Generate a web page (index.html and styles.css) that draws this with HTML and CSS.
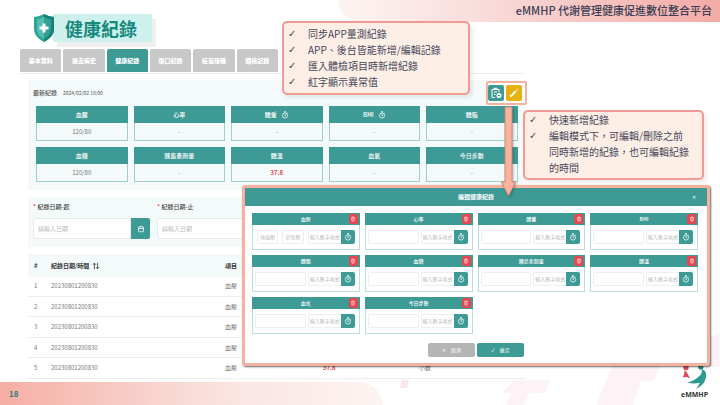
FILE: index.html
```html
<!DOCTYPE html>
<html lang="zh-Hant">
<head>
<meta charset="utf-8">
<title>健康紀錄</title>
<link rel="stylesheet" href="styles.css">
</head>
<body>
<svg class="symbols" aria-hidden="true">
  <symbol id="clock" viewBox="0 0 16 16"><path d="M6 1.2h4M8 2v2M12.4 3.6l1.2 1.2" /><circle cx="8" cy="9" r="5.2"/><path d="M8 6v3.2h2"/></symbol>
  <symbol id="trash" viewBox="0 0 16 16"><path d="M3 4.5h10M6 4V2.5h4V4M4.5 5l.6 8.5h5.8l.6-8.5M8 7v4"/></symbol>
  <symbol id="calendar" viewBox="0 0 16 16"><rect x="3" y="3.5" width="10" height="10" rx="1.5"/><path d="M3 7h10M5.7 1.8v3M10.3 1.8v3"/></symbol>
</svg>
<div class="slide">
  <svg class="backdrop" viewBox="0 0 720 405" preserveAspectRatio="xMaxYMax meet" aria-hidden="true">
    <path fill="#fdf3f7" d="M622 326h54l-22 55H641l-8 24h-37l14-34zM514 380h36l-5 13h-16l-5 12h-18l5-12h-9zM690 345l30-12v34h-30z"/>
    <path fill="#fde4ec" d="M402 380h7l-2 8h-7z"/>
  </svg>

  <header class="top">
    <div class="heading">
      <svg class="shield" viewBox="0 0 22 30" aria-hidden="true">
        <path fill="#27a695" d="M11 1Q6 4 1 4v12q0 8 10 13 10-5 10-13V4Q16 4 11 1z"/>
        <path fill="#158477" d="M11 1q5 3 10 3v12q0 8-10 13z"/>
        <path fill="#57bdb1" d="M11 4Q7 6 4 6.500v10Q4 22 11 26z"/>
        <path fill="#319f94" d="M11 4q4 2 7 2.500v10Q18 22 11 26z"/>
        <path fill="#fff" d="M9.500 10.500h3v3h3v3h-3v3h-3v-3h-3v-3h3z"/>
      </svg>
      <h1>健康紀錄</h1>
    </div>
    <p class="band">eMMHP 代謝管理健康促進數位整合平台</p>
  </header>

  <main>
    <nav class="tabs">
      <button type="button">基本資料</button>
      <button type="button">過去病史</button>
      <button type="button" class="active">健康紀錄</button>
      <button type="button">傷口紀錄</button>
      <button type="button">疫苗接種</button>
      <button type="button">體檢記錄</button>
    </nav>

    <div class="content">
      <section class="panel latest">
        <div class="latest-bar">
          <h2>最新紀錄</h2><time>2024/02/02 18:00</time>
          <div class="tools">
            <button type="button" class="add" aria-label="新增"><svg viewBox="0 0 16 16"><path d="M7 12.500H4V4.500h7V7M6 4.500V3.300h3v1.200M6 7h3M6 9.500h1.500"/><circle cx="11" cy="10.500" r="2.500" fill="#fff" stroke="none"/><path class="dark" d="M9.800 10.500h2.400"/></svg></button>
            <button type="button" class="edit" aria-label="編輯"><svg viewBox="0 0 16 16"><path d="M4.500 11.500l5.500-5.500" stroke-width="2.200"/><path d="M11.200 4.800l.5-.5" stroke-width="2.400"/></svg></button>
          </div>
        </div>
        <div class="stats">
          <article><h3>血壓</h3><p>120/80</p></article>
          <article><h3>心率</h3><p>-</p></article>
          <article><h3>體重 <svg><use href="#clock"/></svg></h3><p>-</p></article>
          <article><h3>BMI <svg><use href="#clock"/></svg></h3><p>-</p></article>
          <article><h3>體脂</h3><p>-</p></article>
          <article><h3>血糖</h3><p>120/80</p></article>
          <article><h3>胰島素劑量</h3><p>-</p></article>
          <article><h3>體溫</h3><p class="alert">37.8</p></article>
          <article><h3>血氧</h3><p>-</p></article>
          <article><h3>今日步數</h3><p>-</p></article>
        </div>
      </section>

      <section class="panel search">
        <div class="field">
          <label for="from"><b>*</b> 紀錄日期-起</label>
          <div class="date"><input id="from" placeholder="請輸入日期"><button type="button" aria-label="選擇日期"><svg><use href="#calendar"/></svg></button></div>
        </div>
        <div class="field">
          <label for="to"><b>*</b> 紀錄日期-止</label>
          <div class="date"><input id="to" placeholder="請輸入日期"><button type="button" aria-label="選擇日期"><svg><use href="#calendar"/></svg></button></div>
        </div>
      </section>

      <table>
        <thead><tr><th class="no">#</th><th class="when">紀錄日期/時間 <svg viewBox="0 0 10 10"><path d="M3 9V1.500M1 3.500l2-2 2 2M7 1v7.500M5.200 6.500l1.800 2 2-2"/></svg></th><th class="item">項目</th><th class="value"></th><th></th></tr></thead>
        <tbody>
          <tr><td>1</td><td>20230801200830</td><td>血壓</td><td></td><td></td></tr>
          <tr><td>2</td><td>20230801200830</td><td>血壓</td><td></td><td></td></tr>
          <tr><td>3</td><td>20230801200830</td><td>血壓</td><td></td><td></td></tr>
          <tr><td>4</td><td>20230801200830</td><td>血壓</td><td></td><td></td></tr>
          <tr><td>5</td><td>20230801200830</td><td>血壓</td><td class="alert">37.8</td><td>小數</td></tr>
        </tbody>
      </table>
    </div>
  </main>

  <footer>18</footer>

  <div class="logo">
    <svg viewBox="0 0 30 28" aria-hidden="true">
      <circle cx="5.500" cy="4" r="3" fill="#d9485a"/><circle cx="22" cy="3.500" r="3" fill="#2b9088"/>
      <path fill="#d9485a" d="M4 7q3 2 4 5l2 4q-4-2-8-1 2-4 2-8z"/>
      <path fill="#2f9a92" d="M23 6q5 1 5 7 0 9-11 15l4-7q-7 2-14-.500 8-2 12-6 5-3 4-8.500z"/>
    </svg>
    <span>eMMHP</span>
  </div>

  <aside class="callout features">
    <ul>
      <li>同步APP量測紀錄</li>
      <li>APP、後台皆能新增/編輯記錄</li>
      <li>匯入體檢項目時新增紀錄</li>
      <li>紅字顯示異常值</li>
    </ul>
  </aside>

  <section class="modal" role="dialog" aria-label="編輯健康紀錄">
    <header><h2>編輯健康紀錄</h2><button type="button" aria-label="關閉">✕</button></header>
    <div class="forms">
      <article><h3>血壓<button type="button" aria-label="刪除"><svg><use href="#trash"/></svg></button></h3><div class="row pair"><input aria-label="收縮壓" placeholder="收縮壓"><input aria-label="舒張壓" placeholder="舒張壓"><input class="num" aria-label="血壓" placeholder="輸入數字格式"><button type="button" aria-label="時間"><svg><use href="#clock"/></svg></button></div></article>
      <article><h3>心率<button type="button" aria-label="刪除"><svg><use href="#trash"/></svg></button></h3><div class="row"><input aria-label="心率"><input class="num" aria-label="心率格式" placeholder="輸入數字格式"><button type="button" aria-label="時間"><svg><use href="#clock"/></svg></button></div></article>
      <article><h3>體重<button type="button" aria-label="刪除"><svg><use href="#trash"/></svg></button></h3><div class="row"><input aria-label="體重"><input class="num" aria-label="體重格式" placeholder="輸入數字格式"><button type="button" aria-label="時間"><svg><use href="#clock"/></svg></button></div></article>
      <article><h3>BMI<button type="button" aria-label="刪除"><svg><use href="#trash"/></svg></button></h3><div class="row"><input aria-label="BMI"><input class="num" aria-label="BMI格式" placeholder="輸入數字格式"><button type="button" aria-label="時間"><svg><use href="#clock"/></svg></button></div></article>
      <article><h3>體脂<button type="button" aria-label="刪除"><svg><use href="#trash"/></svg></button></h3><div class="row"><input aria-label="體脂"><input class="num" aria-label="體脂格式" placeholder="輸入數字格式"><button type="button" aria-label="時間"><svg><use href="#clock"/></svg></button></div></article>
      <article><h3>血糖<button type="button" aria-label="刪除"><svg><use href="#trash"/></svg></button></h3><div class="row"><input aria-label="血糖"><input class="num" aria-label="血糖格式" placeholder="輸入數字格式"><button type="button" aria-label="時間"><svg><use href="#clock"/></svg></button></div></article>
      <article><h3>胰島素劑量<button type="button" aria-label="刪除"><svg><use href="#trash"/></svg></button></h3><div class="row"><input aria-label="胰島素劑量"><input class="num" aria-label="胰島素劑量格式" placeholder="輸入數字格式"><button type="button" aria-label="時間"><svg><use href="#clock"/></svg></button></div></article>
      <article><h3>體溫<button type="button" aria-label="刪除"><svg><use href="#trash"/></svg></button></h3><div class="row"><input aria-label="體溫"><input class="num" aria-label="體溫格式" placeholder="輸入數字格式"><button type="button" aria-label="時間"><svg><use href="#clock"/></svg></button></div></article>
      <article><h3>血氧<button type="button" aria-label="刪除"><svg><use href="#trash"/></svg></button></h3><div class="row"><input aria-label="血氧"><input class="num" aria-label="血氧格式" placeholder="輸入數字格式"><button type="button" aria-label="時間"><svg><use href="#clock"/></svg></button></div></article>
      <article><h3>今日步數<button type="button" aria-label="刪除"><svg><use href="#trash"/></svg></button></h3><div class="row"><input aria-label="今日步數"><input class="num" aria-label="今日步數格式" placeholder="輸入數字格式"><button type="button" aria-label="時間"><svg><use href="#clock"/></svg></button></div></article>
    </div>
    <div class="actions"><button type="button" class="cancel"><span>✕</span>取消</button><button type="button" class="ok"><span>✓</span>確定</button></div>
  </section>

  <aside class="callout editing">
    <ul>
      <li>快速新增紀錄</li>
      <li>編輯模式下，可編輯/刪除之前同時新增的紀錄，也可編輯紀錄的時間</li>
    </ul>
  </aside>

  <svg class="arrow" viewBox="0 0 17 92" aria-hidden="true"><path d="M5 1h7v75h3.500L8.500 90 1.500 76H5z"/></svg>
</div>
</body>
</html>
```

FILE: styles.css
```css
* { box-sizing: border-box; margin: 0; padding: 0; }

:root {
  --teal: #3d9a95;
  --line: #9fcfcc;
  --panel: #f4fafa;
  --coral: #f5b19f;
}

body {
  font-family: "Noto Sans CJK TC", "Noto Sans", sans-serif;
  font-size: 6px;
  line-height: 8px;
  color: #777;
  background: #fff;
}

button, input { font: inherit; border: 0; min-width: 0; }
h2, h3 { font-size: inherit; font-weight: 500; }
ul { list-style: none; }
svg { fill: none; stroke: none; }
.symbols { display: none; }
symbol { stroke: #fff; stroke-width: 1.5; overflow: visible; }

.slide {
  position: relative;
  display: flex;
  flex-direction: column;
  min-height: 100vh;
  overflow: hidden;
}
.backdrop { position: absolute; inset: 0; width: 100%; height: 100%; }

/* Title and brand band */
.top { position: relative; display: grid; grid-template-columns: 47% 1fr; align-items: start; }
.heading { display: flex; align-items: center; padding: 13px 0 5px 33px; }
.shield { width: 22px; height: 30px; margin-right: -2px; z-index: 1; }
h1 {
  padding: 0 15px 0 12px;
  font-size: 18px;
  line-height: 28px;
  color: #17897e;
  background: #cff1ee;
  box-shadow: 4px 5px #efefef;
}
.band {
  height: 22px;
  padding-right: 8px;
  border-bottom-left-radius: 22px;
  font-size: 11px;
  font-weight: 500;
  line-height: 20px;
  text-align: right;
  color: #3c3f55;
  background: linear-gradient(90deg, #fdf5f3, #f9dedd 35%, #f3aaa5);
}

/* Tabs */
main { position: relative; margin-right: 27%; padding-left: 20px; }
.tabs { display: flex; gap: 2px; border-bottom: 1px solid #eee; padding-right: 49%; margin-top: 1px; }
.tabs button {
  flex: 1;
  height: 23px;
  border-radius: 2px 2px 0 0;
  font-weight: 900;
  color: #fff;
  background: #c8c8c8;
}
.tabs .active { margin-bottom: 1px; background: var(--teal); }

.content { display: flex; flex-direction: column; gap: 7px; padding: 6px 0 0 8px; }
.panel { background: var(--panel); }

/* Latest record */
.latest { padding: 1px 8px 8px; }
.latest-bar { display: flex; align-items: center; margin: 0 -9px 0 -3px; gap: 6px; }
.latest-bar h2 { color: #555; }
.latest-bar time { font-size: 5px; color: #555; }
.tools { display: flex; gap: 2px; margin-left: auto; padding: 2px 3px 2px 0; border: 2px solid var(--coral); border-radius: 2px; background: #fff; }
.tools button { width: 16px; height: 16px; border-radius: 2px; background: var(--teal); }
.tools .edit { background: #e7b10d; }
.tools svg { display: block; width: 16px; height: 16px; stroke: #fff; stroke-width: 1; }
.tools .dark { stroke: var(--teal); }
.stats { display: grid; grid-template-columns: repeat(5, 1fr); gap: 6px; margin-top: 1px; }
.stats article { border: 1px solid var(--line); text-align: center; }
.stats h3 { display: flex; justify-content: center; align-items: center; gap: 4px; margin: -1px -1px 0; line-height: 17px; color: #fff; background: var(--teal); }
.stats h3 svg { width: 8px; height: 8px; }
.stats p { line-height: 17px; }
.alert, td.alert { color: #ee4450; font-weight: 700; }

/* Date search */
.search { display: grid; grid-template-columns: 117px 117px; gap: 7px; padding: 6px 5px 8px; }
.field { display: flex; flex-direction: column; gap: 7px; }
.field label { color: #444; font-weight: 500; }
.field b { color: #e55; }
.date { display: flex; height: 21px; }
.date input { flex: 1; padding: 0 4px; border: 1px solid #e6eaea; border-radius: 2px 0 0 2px; background: #fff; }
.date button { display: grid; place-items: center; width: 19px; border-radius: 0 2px 2px 0; background: var(--teal); }
.date svg { width: 8px; height: 8px; }
::placeholder { color: #bbb; opacity: 1; }

/* Record table */
table { width: 100%; height: 125px; table-layout: fixed; border-collapse: collapse; text-align: left; }
th { height: 23px; font-weight: 700; color: #333; background: var(--panel); }
th svg { width: 8px; height: 8px; margin-left: 1px; vertical-align: -2px; stroke: #333; }
td { border-bottom: 1px solid #eee; }
th:first-child, td:first-child { padding-left: 6px; }
.no { width: 23px; }
.when { width: 174px; }
.item { width: 98px; }
.value { width: 96px; }

footer {
  position: relative;
  width: 53%;
  height: 23px;
  margin-top: auto;
  padding-left: 9px;
  border-top-right-radius: 22px;
  font-size: 8px;
  font-weight: 700;
  line-height: 23px;
  color: #2c7d78;
  background: linear-gradient(90deg, #f5aea4, #f9dcd7 50%, #fae5e3 62%, #fdf4f1);
}

.logo { position: absolute; right: 12px; bottom: 6px; width: 27px; text-align: center; }
.logo svg { display: block; width: 27px; height: 27px; }
.logo span { display: block; font-family: "Open Sans", sans-serif; font-size: 7px; font-weight: 700; line-height: 9px; color: #333; }

/* Notes */
.callout {
  position: absolute;
  border: 2px solid #f19994;
  border-radius: 5px;
  font-size: 10px;
  line-height: 16px;
  color: #45475a;
  background: #fdefe6;
  box-shadow: 3px 3px 3px #0001;
}
.callout li { display: flex; }
.callout li::before { content: "✓"; flex: none; width: 20px; font-family: "DejaVu Sans", sans-serif; font-weight: 700; }
.features { left: 282px; top: 21px; width: 188px; padding: 3px 4px; }
.editing { left: 523px; top: 110px; width: 181px; padding: 0 10px 2px 4px; }

.arrow { position: absolute; left: 500px; top: 106px; width: 17px; height: 92px; fill: #f8b39e; stroke: #c98b7a; stroke-width: 1; filter: drop-shadow(1px 1px 1px #0004); }

/* Edit dialog */
.modal {
  position: absolute;
  left: 242px;
  right: 10px;
  top: 185px;
  border: 3px solid var(--coral);
  border-radius: 3px;
  font-size: 5px;
  background: #fff;
  box-shadow: 1px 1px 2px #0009;
}
.modal header { display: flex; align-items: center; height: 18px; padding: 0 9px; color: #fff; background: var(--teal); }
.modal h2 { flex: 1; padding-left: 8px; font-size: 6px; font-weight: 700; text-align: center; }
.modal header button { width: 8px; color: #fff; background: none; }
.forms { display: grid; grid-template-columns: repeat(4, minmax(0, 1fr)); gap: 5px; padding: 7px 9px 9px 7px; }
.forms article { border: 1px solid #b9dfdd; }
.forms h3 { position: relative; margin: -1px -1px 0; line-height: 12px; text-align: center; color: #fff; background: var(--teal); }
.forms h3 button { position: absolute; right: 2px; top: 1px; display: grid; place-items: center; width: 9px; height: 10px; border-radius: 2px; background: #e8474f; }
.forms h3 svg { width: 6px; height: 6px; }
.row { display: flex; padding: 5px 4px 5px 2px; height: 24px; }
.row input { flex: 1; margin-right: 2px; padding: 0 2px; border: 1px solid #eee; border-radius: 2px; background: #fff; }
.row .num { flex: 0 0 33px; margin: 0; padding: 0 1px; border-right: 0; border-radius: 2px 0 0 2px; }
.row button { display: grid; place-items: center; flex: none; width: 14px; border-radius: 0 2px 2px 0; background: var(--teal); }
.row svg { width: 8px; height: 8px; }
.pair { padding-left: 4px; }
.pair input { margin-right: 4px; text-align: center; }
.pair .num { margin: 0; }
.actions { display: flex; justify-content: center; gap: 2px; padding: 0 0 6px; }
.actions button { display: flex; justify-content: center; gap: 5px; align-items: center; width: 47px; height: 14px; border-radius: 2px; color: #fff; }
.cancel { background: #b5b5b5; }
.ok { background: var(--teal); }
```
